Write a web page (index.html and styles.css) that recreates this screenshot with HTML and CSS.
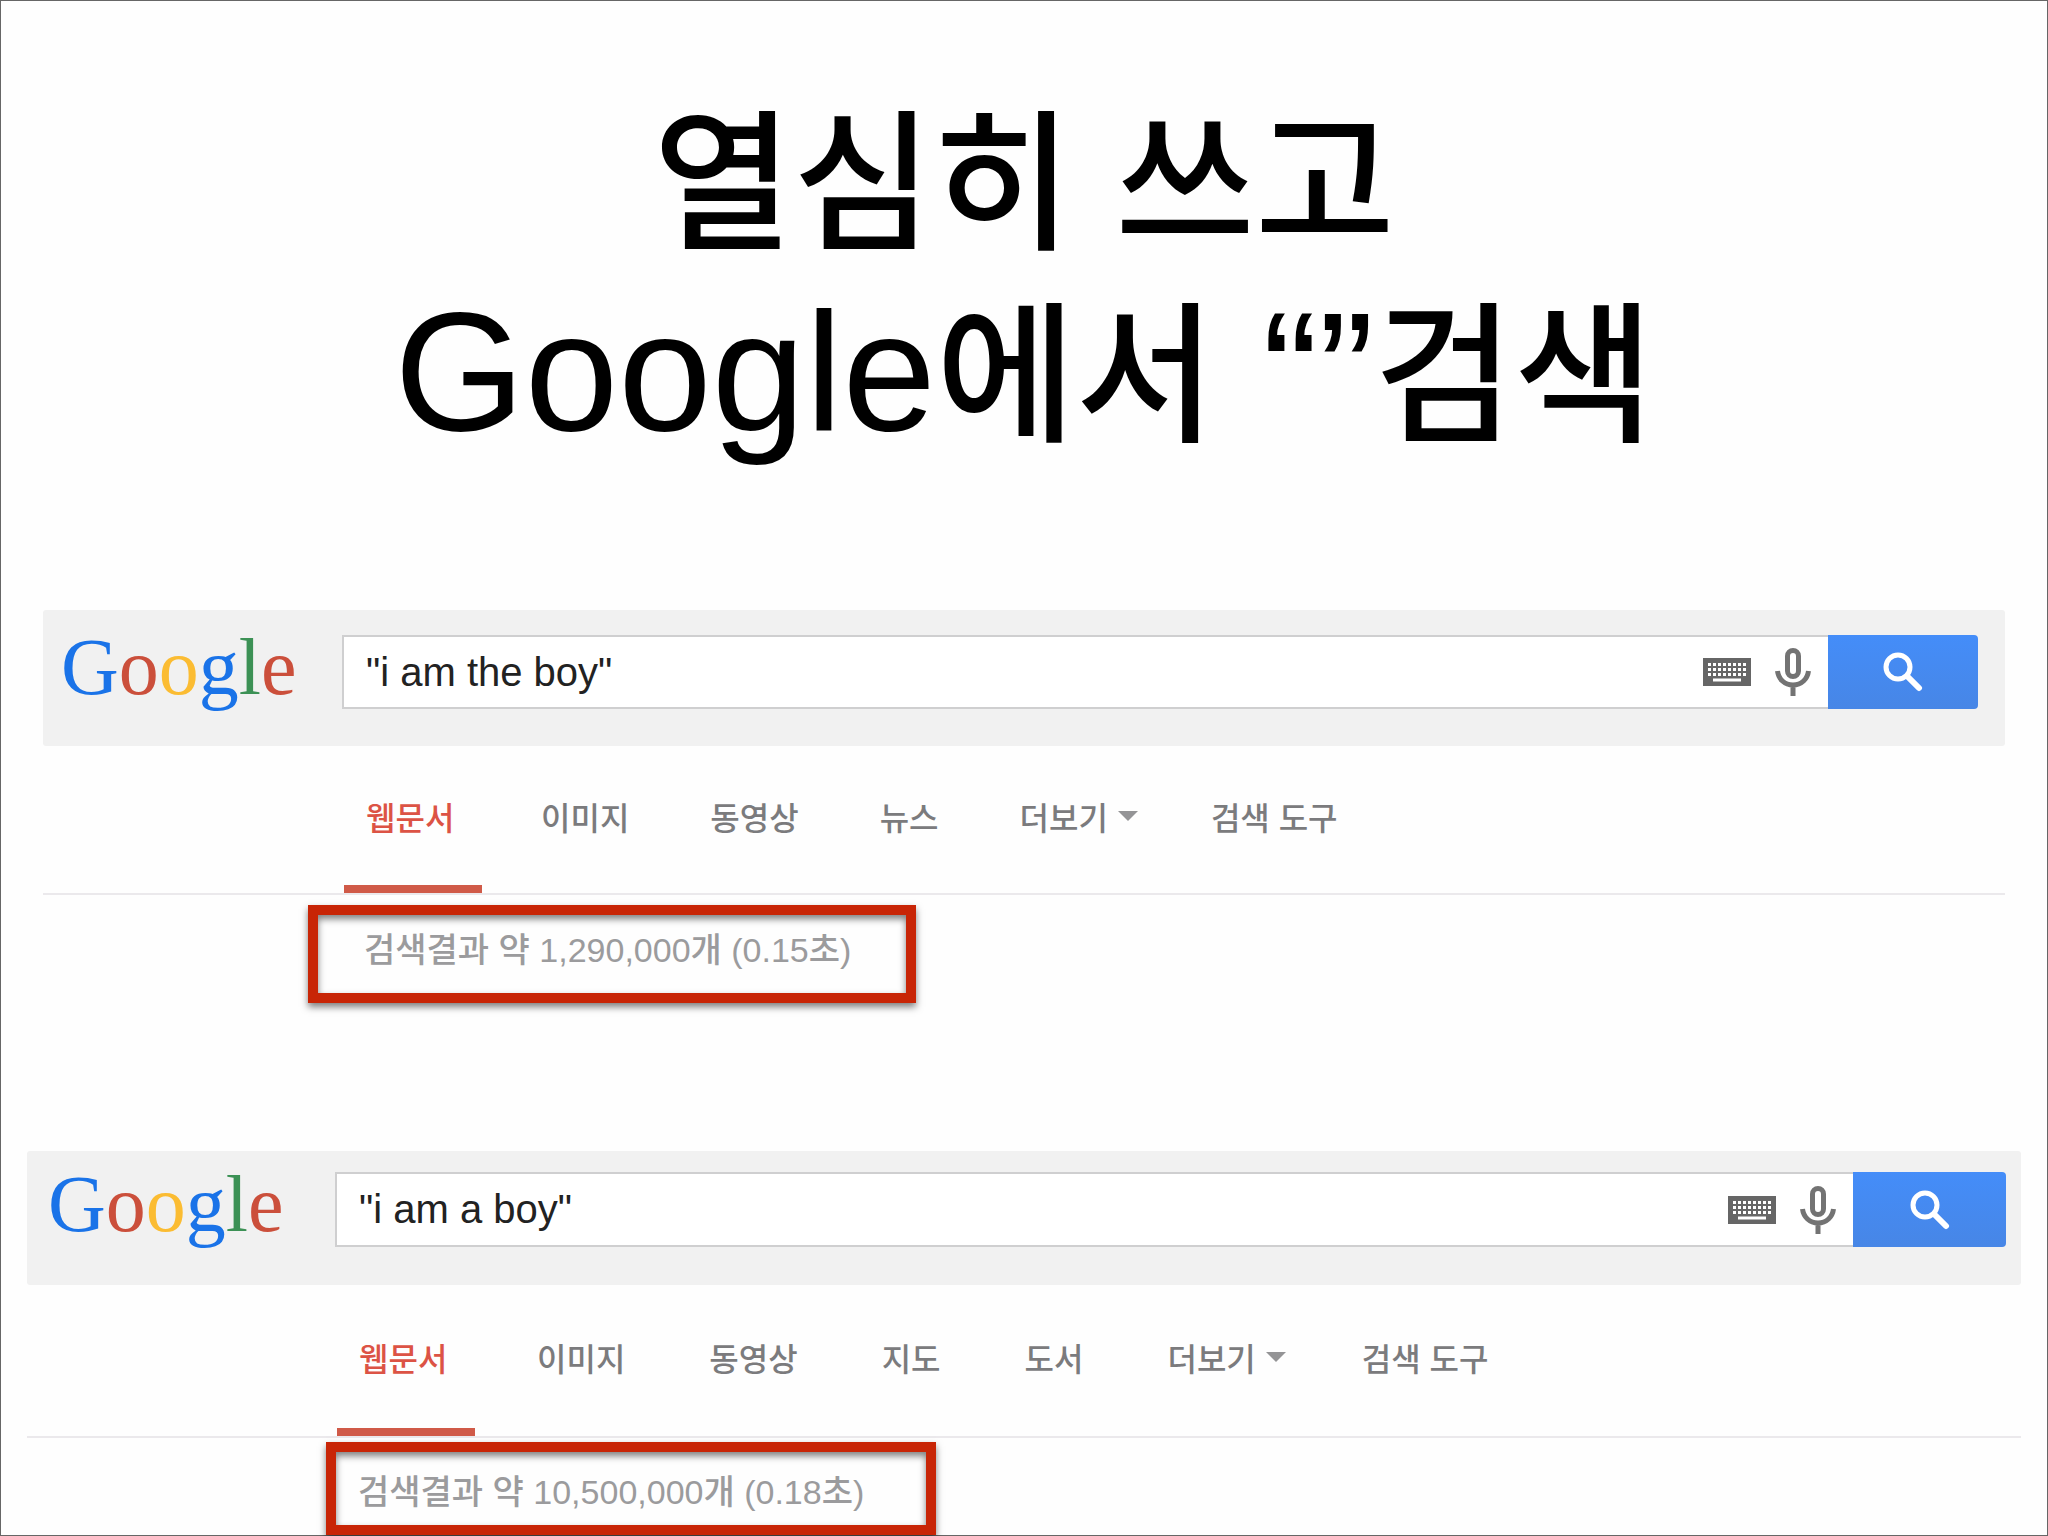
FILE: index.html
```html
<!DOCTYPE html>
<html lang="ko">
<head>
    <meta charset="UTF-8">
    <meta name="viewport" content="width=device-width, initial-scale=1.0">
    <title>열심히 쓰고 Google에서 검색</title>
    <link rel="stylesheet" href="styles.css">
</head>
<body>
    <!-- общие иконки -->
    <svg class="sprite" aria-hidden="true">
        <symbol id="keyboard" viewBox="0 0 48 28">
            <path fill="#666" d="M0 0h48v28H0z"/>
            <path stroke="#fff" stroke-width="3" stroke-dasharray="3 2" d="M5 6.500h38M5 11.500h38M5 16.500h38"/>
            <path stroke="#fff" stroke-width="3" d="M10 22h28"/>
        </symbol>
        <symbol id="mic" viewBox="0 0 36 48">
            <rect x="12.500" y="2.500" width="11" height="26" rx="5.500" fill="none" stroke="#737373" stroke-width="5"/>
            <path fill="none" stroke="#737373" stroke-width="5" d="M2.500 23c1 8 7 14 15.500 14s14.500-6 15.500-14M18 37v11"/>
        </symbol>
        <symbol id="lens" viewBox="0 0 40 40">
            <circle cx="15" cy="15" r="12" fill="none" stroke="#fff" stroke-width="5"/>
            <path stroke="#fff" stroke-width="6" stroke-linecap="round" d="M25 25l11 11"/>
        </symbol>
    </svg>

    <main class="slide">
        <h1>열심히 쓰고<br><span class="latin">Google</span>에서<span class="latin"> “”</span>검색</h1>

        <section class="search first">
            <form class="search-bar">
                <a href="#" class="logo"><span class="blue">G</span><span class="red">o</span><span class="yellow">o</span><span class="blue">g</span><span class="green">l</span><span class="red">e</span></a>
                <div class="field">
                    <input type="text" aria-label="검색" value="&quot;i am the boy&quot;">
                    <button type="button" class="tool" aria-label="키보드"><svg class="keyboard"><use href="#keyboard"/></svg></button>
                    <button type="button" class="tool" aria-label="음성 검색"><svg class="mic"><use href="#mic"/></svg></button>
                </div>
                <button type="button" class="submit" aria-label="검색"><svg class="lens"><use href="#lens"/></svg></button>
            </form>
            <nav class="tabs">
                <a href="#" class="active">웹문서</a>
                <a href="#">이미지</a>
                <a href="#">동영상</a>
                <a href="#">뉴스</a>
                <button type="button" class="more">더보기</button>
                <a href="#">검색 도구</a>
            </nav>
            <p class="stats">검색결과 약 1,290,000개 (0.15초)</p>
        </section>

        <section class="search second">
            <form class="search-bar">
                <a href="#" class="logo"><span class="blue">G</span><span class="red">o</span><span class="yellow">o</span><span class="blue">g</span><span class="green">l</span><span class="red">e</span></a>
                <div class="field">
                    <input type="text" aria-label="검색" value="&quot;i am a boy&quot;">
                    <button type="button" class="tool" aria-label="키보드"><svg class="keyboard"><use href="#keyboard"/></svg></button>
                    <button type="button" class="tool" aria-label="음성 검색"><svg class="mic"><use href="#mic"/></svg></button>
                </div>
                <button type="button" class="submit" aria-label="검색"><svg class="lens"><use href="#lens"/></svg></button>
            </form>
            <nav class="tabs">
                <a href="#" class="active">웹문서</a>
                <a href="#">이미지</a>
                <a href="#">동영상</a>
                <a href="#">지도</a>
                <a href="#">도서</a>
                <button type="button" class="more">더보기</button>
                <a href="#">검색 도구</a>
            </nav>
            <p class="stats">검색결과 약 10,500,000개 (0.18초)</p>
        </section>
    </main>
</body>
</html>
```
FILE: styles.css
```css
* {
    box-sizing: border-box;
}

body {
    margin: 0;
    background: #fefefe;
    font-family: "Liberation Sans", "Noto Sans CJK KR", sans-serif;
}

a {
    text-decoration: none;
}

button, input {
    font: inherit;
    border: none;
    padding: 0;
    background: none;
}

svg {
    display: block;
}

.sprite {
    display: none;
}

.slide {
    min-height: 100vh;
    border: 1px solid #666;
    padding-top: 75px;
}

h1 {
    margin: 0 0 150px;
    color: #000;
    font-family: "Noto Sans CJK KR", sans-serif;
    font-size: 152px;
    font-weight: 500;
    line-height: 192px;
    text-align: center;
}

.latin {
    font-family: "Liberation Sans", sans-serif;
    font-size: 168px;
    font-weight: 400;
    line-height: 1;
}

/* Поиск */
.first {
    margin: 0 42px 148px;
}

.second {
    margin: 0 26px;
}

.search-bar {
    display: flex;
    background: #f1f1f1;
    border-radius: 3px;
    padding: 25px 27px 37px 18px;
}

.second .search-bar {
    padding: 21px 15px 38px 21px;
}

.logo {
    width: 281px;
    font-family: "Liberation Serif", serif;
    font-size: 80px;
    line-height: 64px;
}

.second .logo {
    width: 287px;
}

.blue { color: #1a73e8; }
.red { color: #cb4f3b; }
.yellow { color: #fbbc32; }
.green { color: #3c9155; }

.field {
    flex: 1;
    display: flex;
    align-items: center;
    gap: 24px;
    height: 74px;
    padding: 0 17px 0 22px;
    background: #fff;
    border: 2px solid #cfcfd0;
    border-right: none;
}

.second .field {
    height: 75px;
}

.field input {
    flex: 1;
    min-width: 0;
    color: #222;
    font-size: 40px;
    outline: none;
}

.keyboard {
    width: 48px;
    height: 28px;
}

.mic {
    width: 36px;
    height: 48px;
}

.lens {
    width: 40px;
    height: 40px;
}

.submit {
    display: flex;
    align-items: center;
    justify-content: center;
    width: 150px;
    background: linear-gradient(#448df9, #4786e6);
    border-radius: 0 4px 4px 0;
}

.second .submit {
    width: 153px;
}

/* Вкладки */
.tabs {
    display: flex;
    gap: 37px;
    height: 149px;
    padding-left: 301px;
    border-bottom: 2px solid #ebe9ec;
}

.second .tabs {
    gap: 40px;
    height: 153px;
    padding-left: 310px;
}

.tabs a, .tabs button {
    display: flex;
    align-items: center;
    padding: 0 22px;
    border-bottom: 8px solid transparent;
    color: #7b7b7d;
    font-size: 32px;
    font-weight: 500;
    white-space: nowrap;
}

.tabs .active {
    min-width: 138px;
    color: #dc5345;
    border-color: #d05a48;
}

.tabs .more {
    padding-right: 14px;
}

.more::after {
    content: "";
    margin-left: 10px;
    border: 10px solid transparent;
    border-top-color: #949496;
    border-bottom: none;
}

.stats {
    width: 608px;
    height: 98px;
    margin: 10px 0 0 265px;
    padding-left: 46px;
    border: 10px solid #c82506;
    box-shadow: 0 4px 7px rgba(0, 0, 0, 0.5), inset 0 4px 7px rgba(0, 0, 0, 0.5);
    color: #9b9b9d;
    font-size: 34px;
    font-weight: 500;
    line-height: 70px;
}

.second .stats {
    width: 610px;
    height: 93px;
    margin: 4px 0 0 299px;
    padding-left: 22px;
    line-height: 80px;
}
```
